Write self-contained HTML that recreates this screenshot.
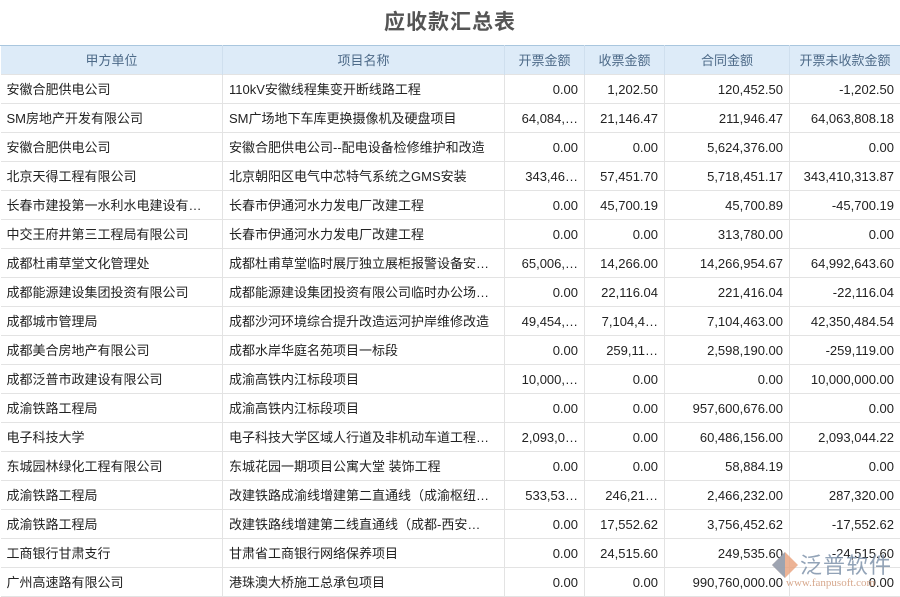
<!DOCTYPE html>
<html><head><meta charset="utf-8"><style>
*{margin:0;padding:0;box-sizing:border-box}
body{width:900px;height:595px;overflow:hidden;background:#fff;font-family:"Liberation Sans","Noto Sans CJK SC",sans-serif;position:relative}
h1{position:absolute;top:6px;left:0;width:900px;text-align:center;font-size:21px;font-weight:bold;color:#555;letter-spacing:1px}
table{position:absolute;top:45px;left:0;width:900px;border-collapse:collapse;table-layout:fixed;font-size:13px;color:#222}
th{background:#ddebf8;color:#4d6a88;font-weight:normal;height:29px;line-height:27px;border-top:1px solid #a9c6de;border-left:1px solid #fff;border-right:1px solid #cfdfee;text-align:center;vertical-align:middle}
td{height:29px;line-height:27px;border:1px solid #e3e3e3;padding:0 6px;white-space:nowrap;overflow:hidden;text-overflow:ellipsis;vertical-align:middle}
td span,th span{display:inline-block;line-height:16px;vertical-align:middle}
td.n{text-align:right}
tr td:first-child{border-left:none}
.wm{position:absolute;left:770px;top:544px;width:130px;height:50px}
</style></head><body>
<h1>应收款汇总表</h1>
<table>
<colgroup><col style="width:222px"><col style="width:282px"><col style="width:80px"><col style="width:80px"><col style="width:125px"><col style="width:111px"></colgroup>
<tr><th>甲方单位</th><th>项目名称</th><th>开票金额</th><th>收票金额</th><th>合同金额</th><th>开票未收款金额</th></tr>
<tr><td>安徽合肥供电公司</td><td>110kV安徽线程集变开断线路工程</td><td class="n">0.00</td><td class="n">1,202.50</td><td class="n">120,452.50</td><td class="n">-1,202.50</td></tr>
<tr><td>SM房地产开发有限公司</td><td>SM广场地下车库更换摄像机及硬盘项目</td><td class="n">64,084,…</td><td class="n">21,146.47</td><td class="n">211,946.47</td><td class="n">64,063,808.18</td></tr>
<tr><td>安徽合肥供电公司</td><td>安徽合肥供电公司--配电设备检修维护和改造</td><td class="n">0.00</td><td class="n">0.00</td><td class="n">5,624,376.00</td><td class="n">0.00</td></tr>
<tr><td>北京天得工程有限公司</td><td>北京朝阳区电气中芯特气系统之GMS安装</td><td class="n">343,46…</td><td class="n">57,451.70</td><td class="n">5,718,451.17</td><td class="n">343,410,313.87</td></tr>
<tr><td>长春市建投第一水利水电建设有…</td><td>长春市伊通河水力发电厂改建工程</td><td class="n">0.00</td><td class="n">45,700.19</td><td class="n">45,700.89</td><td class="n">-45,700.19</td></tr>
<tr><td>中交王府井第三工程局有限公司</td><td>长春市伊通河水力发电厂改建工程</td><td class="n">0.00</td><td class="n">0.00</td><td class="n">313,780.00</td><td class="n">0.00</td></tr>
<tr><td>成都杜甫草堂文化管理处</td><td>成都杜甫草堂临时展厅独立展柜报警设备安…</td><td class="n">65,006,…</td><td class="n">14,266.00</td><td class="n">14,266,954.67</td><td class="n">64,992,643.60</td></tr>
<tr><td>成都能源建设集团投资有限公司</td><td>成都能源建设集团投资有限公司临时办公场…</td><td class="n">0.00</td><td class="n">22,116.04</td><td class="n">221,416.04</td><td class="n">-22,116.04</td></tr>
<tr><td>成都城市管理局</td><td>成都沙河环境综合提升改造运河护岸维修改造</td><td class="n">49,454,…</td><td class="n">7,104,4…</td><td class="n">7,104,463.00</td><td class="n">42,350,484.54</td></tr>
<tr><td>成都美合房地产有限公司</td><td>成都水岸华庭名苑项目一标段</td><td class="n">0.00</td><td class="n">259,11…</td><td class="n">2,598,190.00</td><td class="n">-259,119.00</td></tr>
<tr><td>成都泛普市政建设有限公司</td><td>成渝高铁内江标段项目</td><td class="n">10,000,…</td><td class="n">0.00</td><td class="n">0.00</td><td class="n">10,000,000.00</td></tr>
<tr><td>成渝铁路工程局</td><td>成渝高铁内江标段项目</td><td class="n">0.00</td><td class="n">0.00</td><td class="n">957,600,676.00</td><td class="n">0.00</td></tr>
<tr><td>电子科技大学</td><td>电子科技大学区域人行道及非机动车道工程…</td><td class="n">2,093,0…</td><td class="n">0.00</td><td class="n">60,486,156.00</td><td class="n">2,093,044.22</td></tr>
<tr><td>东城园林绿化工程有限公司</td><td>东城花园一期项目公寓大堂 装饰工程</td><td class="n">0.00</td><td class="n">0.00</td><td class="n">58,884.19</td><td class="n">0.00</td></tr>
<tr><td>成渝铁路工程局</td><td>改建铁路成渝线增建第二直通线（成渝枢纽…</td><td class="n">533,53…</td><td class="n">246,21…</td><td class="n">2,466,232.00</td><td class="n">287,320.00</td></tr>
<tr><td>成渝铁路工程局</td><td>改建铁路线增建第二线直通线（成都-西安…</td><td class="n">0.00</td><td class="n">17,552.62</td><td class="n">3,756,452.62</td><td class="n">-17,552.62</td></tr>
<tr><td>工商银行甘肃支行</td><td>甘肃省工商银行网络保养项目</td><td class="n">0.00</td><td class="n">24,515.60</td><td class="n">249,535.60</td><td class="n">-24,515.60</td></tr>
<tr><td>广州高速路有限公司</td><td>港珠澳大桥施工总承包项目</td><td class="n">0.00</td><td class="n">0.00</td><td class="n">990,760,000.00</td><td class="n">0.00</td></tr>
</table>
<div class="wm">
<svg width="30" height="30" style="position:absolute;left:0;top:6px" viewBox="0 0 30 30"><path d="M15 2 L28 15 L15 28 L2 15Z" fill="#e8a07a" opacity=".8"/><path d="M15 2 L2 15 L15 28Z" fill="#8aa0b8" opacity=".8"/></svg>
<div style="position:absolute;left:30px;top:4px;font-size:22px;color:#7f93ab;letter-spacing:1px;opacity:.85">泛普软件</div>
<div style="position:absolute;left:16px;top:33px;font-size:11px;color:#d09878;font-family:'Liberation Serif',serif;opacity:.85">www.fanpusoft.com</div>
</div>
</body></html>
